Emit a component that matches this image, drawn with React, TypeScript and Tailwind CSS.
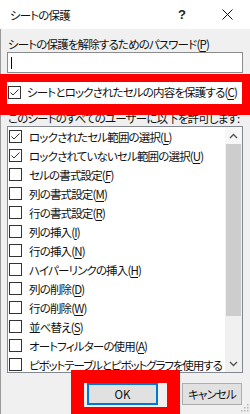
import type { ReactNode } from 'react'

const ITEMS: { label: string; key?: string; checked?: boolean }[] = [
  { label: 'ロックされたセル範囲の選択', key: 'L', checked: true },
  { label: 'ロックされていないセル範囲の選択', key: 'U', checked: true },
  { label: 'セルの書式設定', key: 'F' },
  { label: '列の書式設定', key: 'M' },
  { label: '行の書式設定', key: 'R' },
  { label: '列の挿入', key: 'I' },
  { label: '行の挿入', key: 'N' },
  { label: 'ハイパーリンクの挿入', key: 'H' },
  { label: '列の削除', key: 'D' },
  { label: '行の削除', key: 'W' },
  { label: '並べ替え', key: 'S' },
  { label: 'オートフィルターの使用', key: 'A' },
  { label: 'ピボットテーブルとピボットグラフを使用する' },
]

function Box({ checked }: { checked?: boolean }) {
  return (
    <span className="w-[13px] h-[13px] shrink-0 bg-white border border-[#333] flex items-center justify-center">
      {checked && (
        <svg width="11" height="11" viewBox="0 0 11 11">
          <path d="M1.5 5.5 L4 8 L9.5 2.5" fill="none" stroke="#333" strokeWidth="1" />
        </svg>
      )}
    </span>
  )
}

function Label({ text, k }: { text: string; k?: string }): ReactNode {
  return (
    <span className="whitespace-nowrap">
      {text}
      {k && (
        <>
          (<span className="underline underline-offset-2">{k}</span>)
        </>
      )}
    </span>
  )
}

function Chevron({ up }: { up?: boolean }) {
  return (
    <svg width="9" height="6" viewBox="0 0 9 6">
      <path
        d={up ? 'M1 5 L4.5 1.5 L8 5' : 'M1 1 L4.5 4.5 L8 1'}
        fill="none"
        stroke="#555"
        strokeWidth="1.4"
      />
    </svg>
  )
}

export default function App() {
  return (
    <div className="relative w-[250px] h-[414px] overflow-hidden bg-[#f0f0f0] text-[11.5px] tracking-[-0.85px] leading-[16px] text-[#111] font-['Noto_Sans_CJK_JP','Meiryo_UI',sans-serif] [font-feature-settings:'palt']">
      {/* title bar */}
      <div className="h-[29px] bg-white flex items-center pl-[10px]">
        <span>シートの保護</span>
        <span className="ml-auto mr-[36px] font-['Liberation_Sans',sans-serif] text-[13px] tracking-normal font-bold text-[#222]">?</span>
        <svg width="11" height="11" viewBox="0 0 11 11" className="mr-[17px]">
          <path d="M0.5 0.5 L10.5 10.5 M10.5 0.5 L0.5 10.5" stroke="#111" strokeWidth="1" />
        </svg>
      </div>

      <div className="flex flex-col border-l border-[#9a9a9a] h-[385px]">
        <div className="mt-[7px] pl-[7px] h-[16px]">
          <Label text="シートの保護を解除するためのパスワード" k="P" />
        </div>
        <div className="mt-0 ml-[6px] w-[236px] h-[21px] bg-white border border-[#8c8c8c] flex items-center pl-[3px]">
          <span className="w-px h-[12px] bg-black" />
        </div>

        {/* highlighted checkbox row */}
        <div className="relative z-10 -ml-px mt-px w-[250px] h-[41px] border-t-[8px] border-l-[7px] border-r-[8px] border-b-[11px] border-[#ff0000] bg-white flex items-center gap-[6px] pl-[1px] pb-[2px]">
          <Box checked />
          <Label text="シートとロックされたセルの内容を保護する" k="C" />
        </div>

        <div className="-mt-[5px] pl-[7px] h-[16px] whitespace-nowrap overflow-hidden">
          このシートのすべてのユーザーに以下を許可します:
        </div>

        {/* list */}
        <div className="ml-[6px] w-[236px] h-[247px] bg-white border border-[#828790] flex overflow-hidden">
          <div className="flex-1 min-w-0 flex flex-col overflow-hidden">
            {ITEMS.map((it) => (
              <div
                key={it.label}
                className={`h-[19px] shrink-0 flex items-center gap-[7px] pl-[1px] ${it.key ? '' : 'tracking-[-1.1px]'}`}
              >
                <Box checked={it.checked} />
                <Label text={it.label} k={it.key} />
              </div>
            ))}
          </div>
          <div className="w-[17px] shrink-0 flex flex-col bg-[#f0f0f0]">
            <div className="h-[17px] flex items-center justify-center bg-[#f7f7f7]">
              <Chevron up />
            </div>
            <div className="h-[172px] mx-px bg-[#cdcdcd]" />
            <div className="flex-1" />
            <div className="h-[17px] flex items-center justify-center">
              <Chevron />
            </div>
          </div>
        </div>

        {/* buttons */}
        <div className="mt-[10px] flex items-start">
          <button className="ml-[86px] w-[71px] h-[22px] bg-[#e1e1e1] border-2 border-[#0078d7] flex items-center justify-center text-[#111] tracking-normal">
            OK
          </button>
          <button className="ml-[24px] w-[60px] h-[22px] bg-[#e1e1e1] border border-[#adadad] flex items-center justify-center text-[#111]">
            キャンセル
          </button>
        </div>
      </div>

      {/* red annotation around OK */}
      <div className="absolute left-[71px] top-[370px] w-[109px] h-[50px] border-[13px] border-[#ff0000]" />

      {/* resize grip */}
      <svg width="8" height="8" viewBox="0 0 8 8" className="absolute right-[1px] bottom-[2px]">
        <rect x="6" y="0" width="1.5" height="1.5" fill="#b5b5b5" />
        <rect x="3" y="3" width="1.5" height="1.5" fill="#b5b5b5" />
        <rect x="6" y="3" width="1.5" height="1.5" fill="#b5b5b5" />
        <rect x="0" y="6" width="1.5" height="1.5" fill="#b5b5b5" />
        <rect x="3" y="6" width="1.5" height="1.5" fill="#b5b5b5" />
        <rect x="6" y="6" width="1.5" height="1.5" fill="#b5b5b5" />
      </svg>
    </div>
  )
}
